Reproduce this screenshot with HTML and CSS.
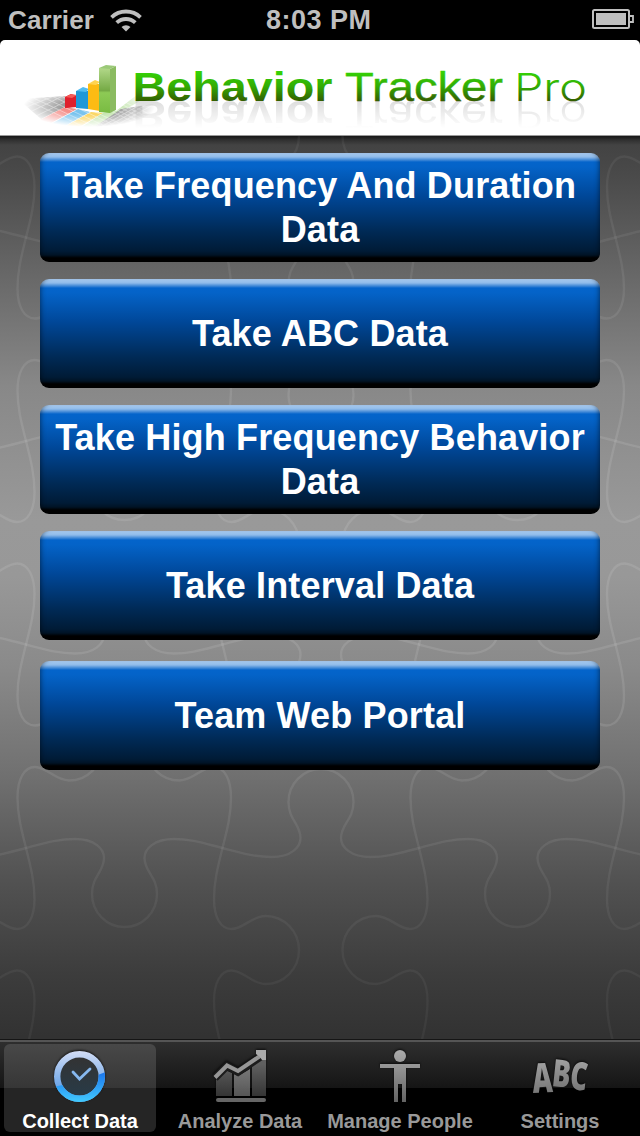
FILE: index.html
```
<!DOCTYPE html>
<html lang="en">
<head>
<meta charset="UTF-8" />
<meta name="viewport" content="width=device-width, initial-scale=1" />
<title>Behavior Tracker Pro</title>
<link rel="stylesheet" href="styles.css">
</head>
<body>

<div class="statusBar">
  <div class="carrier">
    <span class="carrierName">Carrier</span>
    <svg class="wifi" width="32" height="24" viewBox="0 0 32 24" fill="none" stroke="#bfbfbf" stroke-width="3.800">
      <path d="M1.500 9.300a21 21 0 0 1 29 0" />
      <path d="M6.700 14.700a13.500 13.500 0 0 1 18.600 0" />
      <path d="M16 23.500l-4.500-4.500a6.400 6.400 0 0 1 9 0z" fill="#bfbfbf" stroke="none" />
    </svg>
  </div>
  <span class="clock">8:03 PM</span>
  <svg class="battery" width="42" height="20" viewBox="0 0 42 20">
    <rect x="1" y="1" width="36" height="18" rx="1.500" fill="none" stroke="#bfbfbf" stroke-width="2" />
    <rect x="4" y="4" width="30" height="12" fill="#bfbfbf" />
    <path d="M38 7h3v6h-3" fill="none" stroke="#bfbfbf" stroke-width="1.800" />
  </svg>
</div>

<header class="header">
  <svg class="logo" width="640" height="95" viewBox="0 40 640 95">
    <defs>
      <linearGradient id="green" gradientUnits="userSpaceOnUse" x1="0" y1="71" x2="0" y2="101">
        <stop offset="0" stop-color="#35d406" />
        <stop offset=".5" stop-color="#32ad04" />
        <stop offset="1" stop-color="#345d00" />
      </linearGradient>
      <linearGradient id="fade" gradientUnits="userSpaceOnUse" x1="0" y1="100" x2="0" y2="128">
        <stop offset="0" stop-color="#fff" stop-opacity=".14" />
        <stop offset="1" stop-color="#fff" stop-opacity="0" />
      </linearGradient>
      <mask id="fadeMask" maskUnits="userSpaceOnUse" x="0" y="100" width="640" height="35">
        <rect x="0" y="100" width="640" height="35" fill="url(#fade)" />
      </mask>
      <radialGradient id="floorFade">
        <stop offset=".4" stop-color="#fff" />
        <stop offset="1" stop-color="#fff" stop-opacity="0" />
      </radialGradient>
      <mask id="floorMask" maskUnits="userSpaceOnUse" x="15" y="86" width="145" height="46">
        <ellipse cx="89" cy="107" rx="66" ry="20" fill="url(#floorFade)" />
      </mask>
      <linearGradient id="bar" x1="0" y1="0" x2="0" y2="1">
        <stop offset="0" stop-color="#b2d889" />
        <stop offset=".5" stop-color="#75aa45" />
        <stop offset=".55" stop-color="#8dca55" />
        <stop offset="1" stop-color="#79bb42" />
      </linearGradient>
      <g id="wordmark" class="wordmark">
        <text class="wordBold" x="132.500" y="101" textLength="200" lengthAdjust="spacingAndGlyphs">Behavior</text>
        <text class="wordRegular" x="345" y="101" textLength="158" lengthAdjust="spacingAndGlyphs">Tracker</text>
        <text class="wordLight" x="514" y="101" textLength="73" lengthAdjust="spacingAndGlyphs">Pro</text>
      </g>
    </defs>

    <!-- floor under the chart -->
    <g mask="url(#floorMask)">
      <path d="M18 99l47-3v11l-24 12z" fill="#9a9a9a" />
      <path d="M40 120l25-13 12 2-26 14z" fill="#f58f8a" />
      <path d="M51 124l27-15 12 3-27 15z" fill="#79c3ee" />
      <path d="M64 127l27-15 12 1-27 16z" fill="#fad768" />
      <path d="M77 130l26-17 13-2 22-17 8 3-54 34z" fill="#c5e5b0" />
      <path d="M90 130l31-21 38-6-8 18-50 12z" fill="#8f8f8f" />
      <g stroke="#fff" stroke-width=".9" opacity=".45">
        <path d="M20 97l75 35M27 95l75 35M34 93l75 35M41 91l75 35M48 90l75 35M85 98l60 30M93 98l60 30M101 98l50 25M109 98l40 20M117 98l36 18" />
        <path d="M24 108l45-18M28 113l45-22M34 117l45-22M92 132l60-34M98 132l60-34M104 132l58-32M86 132l60-34" />
      </g>
    </g>

    <path d="M65 97l7-3v13l-7 1z" fill="#e42932" />
    <path d="M65 97l6-3 6 2v11l-12 1z" fill="#df1f2c" />
    <path d="M65 97l6-3 6 1-5 3z" fill="#f45b58" />
    <path d="M76 91h12v18l-12-1z" fill="#1f98d8" />
    <path d="M76 91l7-4 6 2-3 3z" fill="#51bcf0" />
    <path d="M88 84h12v27l-12-2z" fill="#fdbb13" />
    <path d="M88 84l7-4 5 2-4 3z" fill="#ffd450" />
    <path d="M99 68h11v45l-11-1z" fill="url(#bar)" />
    <path d="M110 69l6-3v44l-6 3z" fill="#8bbb61" />
    <path d="M99 68l7-3 10 1-6 3z" fill="#9bc978" />

    <use href="#wordmark" fill="url(#green)" stroke="url(#green)" />
    <!-- reflection -->
    <g mask="url(#fadeMask)">
      <use href="#wordmark" fill="#000" transform="matrix(1 0 0 -1 0 202)" />
    </g>
  </svg>
</header>

<main class="content">
  <svg class="puzzle" width="640" height="903" viewBox="0 136 640 903" fill="none">
    <defs>
      <path id="h" d="M0 0C19-5 32-9 49-9C69-9 78 1 78 10C78 24 66 28 66 46A32.500 33 0 0 0 131 46C131 28 118.500 24 118.500 10C118.500 1 128-9 148-9C165-9 177-5 196.500 0" />
      <path id="v" d="M0 0C5 20 8.500 34 8.500 51C8.500 69 2 81-9 81C-21 81-29 68-43 68A33.500 34 0 0 0-43 136C-29 136-21 122.500-9 122.500C2 122.500 8.500 135 8.500 153C8.500 170 5 184 0 203.500" />
      <g id="tile">
        <use href="#h" />
        <use href="#h" transform="translate(196.500 0) scale(1 -1)" />
        <use href="#h" transform="translate(0 203.500) scale(1 -1)" />
        <use href="#h" transform="translate(196.500 203.500)" />
        <use href="#v" />
        <use href="#v" transform="translate(0 203.500) scale(-1 1)" />
        <use href="#v" transform="translate(196.500 0) scale(-1 1)" />
        <use href="#v" transform="translate(196.500 203.500)" />
      </g>
      <g id="lastRow">
        <use href="#h" />
        <use href="#h" transform="translate(196.500 0) scale(1 -1)" />
        <use href="#v" />
        <use href="#v" transform="translate(196.500 0) scale(-1 1)" />
      </g>
    </defs>
    <g stroke="#fff" stroke-opacity=".1" stroke-width="2.400">
      <use href="#tile" x="-367" y="34" />
      <use href="#tile" x="26" y="34" />
      <use href="#tile" x="419" y="34" />
      <use href="#tile" x="-367" y="441" />
      <use href="#tile" x="26" y="441" />
      <use href="#tile" x="419" y="441" />
      <use href="#lastRow" x="-367" y="848" />
      <use href="#lastRow" x="26" y="848" />
      <use href="#lastRow" x="419" y="848" />
    </g>
  </svg>

  <nav class="menu">
    <button class="menuButton">Take Frequency And Duration Data</button>
    <button class="menuButton">Take ABC Data</button>
    <button class="menuButton">Take High Frequency Behavior Data</button>
    <button class="menuButton">Take Interval Data</button>
    <button class="menuButton portal">Team Web Portal</button>
  </nav>
</main>

<footer class="tabBar">
  <div class="tab active">
    <svg class="tabIcon" width="56" height="56" viewBox="0 0 56 56">
      <defs>
        <linearGradient id="ringTop" gradientUnits="userSpaceOnUse" x1="0" y1="2" x2="0" y2="38">
          <stop offset="0" stop-color="#d3ddf5" />
          <stop offset="1" stop-color="#6ba5e8" />
        </linearGradient>
        <linearGradient id="ringBottom" gradientUnits="userSpaceOnUse" x1="0" y1="24" x2="0" y2="54">
          <stop offset="0" stop-color="#1c78ee" />
          <stop offset="1" stop-color="#43cdff" />
        </linearGradient>
        <linearGradient id="face" x1="0" y1="0" x2="0" y2="1">
          <stop offset="0" stop-color="#333" />
          <stop offset="1" stop-color="#283b48" />
        </linearGradient>
        <clipPath id="lower"><path d="M0 38Q28 34 56 22v34H0z" /></clipPath>
      </defs>
      <circle cx="27.500" cy="27.500" r="20" fill="url(#face)" />
      <circle cx="27.500" cy="27.500" r="22.300" fill="none" stroke="url(#ringTop)" stroke-width="6.400" />
      <circle cx="27.500" cy="27.500" r="22.300" fill="none" stroke="url(#ringBottom)" stroke-width="6.400" clip-path="url(#lower)" />
      <path d="M21 23l6.500 7L38 20" fill="none" stroke="#86b8ef" stroke-width="2.800" stroke-linecap="round" />
    </svg>
    <span class="tabLabel">Collect Data</span>
  </div>
  <div class="tab">
    <svg class="tabIcon" width="56" height="56" viewBox="0 0 56 56">
      <defs>
        <linearGradient id="grey" gradientUnits="userSpaceOnUse" x1="0" y1="2" x2="0" y2="54">
          <stop offset="0" stop-color="#aaa" />
          <stop offset="1" stop-color="#626262" />
        </linearGradient>
        <linearGradient id="greyText" x1="0" y1="0" x2="0" y2="1">
          <stop offset=".1" stop-color="#aaa" />
          <stop offset=".9" stop-color="#707070" />
        </linearGradient>
        <linearGradient id="column" gradientUnits="userSpaceOnUse" x1="0" y1="15" x2="0" y2="48">
          <stop offset="0" stop-color="#606060" />
          <stop offset="1" stop-color="#333" />
        </linearGradient>
      </defs>
      <path fill="url(#column)" d="M4 29l9-8 7 3v23H4zM40 17l10-7h4v37H40z" />
      <path fill="url(#grey)" d="M22 25l4 2 12-7v27H22z" opacity=".8" />
      <path fill="none" stroke="#1c1c1c" stroke-width="7.500" d="M3 29L15 17l11 6 24-16" />
      <path fill="none" stroke="#969696" stroke-width="4" d="M3 28.500L15 16.500l11 5.500L51 5" />
      <path fill="#aaa" d="M44 1h10v10h-4l-2-3-4-3z" />
      <rect x="4" y="49" width="50" height="4" rx="2" fill="#666" />
    </svg>
    <span class="tabLabel">Analyze Data</span>
  </div>
  <div class="tab">
    <svg class="tabIcon" width="56" height="56" viewBox="0 0 56 56" fill="url(#grey)">
      <circle cx="28" cy="7" r="6" />
      <path d="M8 15h40v4H34v34h-4V35h-4v18h-4V19H8z" />
    </svg>
    <span class="tabLabel">Manage People</span>
  </div>
  <div class="tab">
    <svg class="tabIcon abc" width="56" height="56" viewBox="0 0 56 56">
      <text transform="translate(1 44) rotate(-3) scale(.68 1)" font-size="41">A</text>
      <text transform="translate(19 37) rotate(6) scale(.72 1)" font-size="38">B</text>
      <text transform="translate(37 40) rotate(6) scale(.68 1)" font-size="39">C</text>
    </svg>
    <span class="tabLabel">Settings</span>
  </div>
</footer>

</body>
</html>
```
FILE: styles.css
```
* { box-sizing: border-box; }

body {
  margin: 0;
  width: 640px;
  height: 1136px;
  display: flex;
  flex-direction: column;
  overflow: hidden;
  background: #000;
  font-family: "Liberation Sans", Arial, sans-serif;
  font-weight: bold;
}

.statusBar {
  height: 40px;
  padding: 0 6px 0 8px;
  display: grid;
  grid-template-columns: 258px 1fr auto;
  align-items: center;
  color: #bfbfbf;
}
.carrier {
  display: flex;
  align-items: center;
}
.carrierName {
  width: 102px;
  font-size: 26px;
  letter-spacing: 0.1px;
}
.clock {
  font-size: 27px;
  letter-spacing: 0.5px;
}
.wifi { margin-bottom: 1px; }
.battery { margin-top: -2px; }

.header {
  height: 96px;
  background: #fff;
  border-radius: 5px 5px 0 0;
  border-bottom: 1px solid #999;
}
.logo { display: block; }
.wordmark { font-size: 40px; }
.wordBold {
  font-weight: 700;
  stroke-width: 0;
}
.wordRegular {
  font-weight: 400;
  stroke-width: 0.4px;
}
.wordLight {
  font-family: Inter, sans-serif;
  font-size: 38.500px;
  font-weight: 300;
  stroke-width: 0;
}

.content {
  position: relative;
  height: 903px;
  background: linear-gradient(#161616 0, #303030 4px, #434343 9px, #4a4a4a 40px, #626262 120px, #888 250px, #999 385px, #989898 440px, #8a8a8a 530px, #707070 640px, #535353 740px, #3c3c3c 840px, #323232 900px);
}
.puzzle {
  position: absolute;
  top: 0;
  left: 0;
  -webkit-mask-image: linear-gradient(rgba(0,0,0,0.5), #000 35%, #000 65%, rgba(0,0,0,0.45) 90%);
  mask-image: linear-gradient(rgba(0,0,0,0.5), #000 35%, #000 65%, rgba(0,0,0,0.45) 90%);
}

.menu {
  position: relative;
  padding: 17px 40px 0;
  display: flex;
  flex-direction: column;
  gap: 17px;
}
.menuButton {
  height: 109px;
  padding: 0 8px;
  border: none;
  border-radius: 9px;
  background: linear-gradient(#a9cbef 0, #8fbbea 4px, #3f87d6 7px, #0464cb 9px, #0463c8 14px, #00489a 42px, #002a56 78px, #001b36 98px, #001325 102px, #000 105px);
  box-shadow: inset 5px 0 5px -4px rgba(0,0,0,0.45), inset -5px 0 5px -4px rgba(0,0,0,0.45);
  color: #fff;
  font: bold 36px/44px "Liberation Sans", Arial, sans-serif;
  letter-spacing: 0.15px;
  cursor: pointer;
}
.portal { margin-top: 4px; }

.tabBar {
  height: 97px;
  padding: 4px 4px 4px;
  display: grid;
  grid-template-columns: repeat(4, 152px);
  column-gap: 8px;
  border-top: 1px solid #151515;
  background: linear-gradient(#555 0, #555 2px, #2e2e2e 2px, #151515 48px, #000 48px);
}
.tab {
  height: 88px;
  padding-top: 5px;
  display: flex;
  flex-direction: column;
  align-items: center;
}
.tab.active {
  border-radius: 6px;
  background: linear-gradient(#484848 0, #363636 44px, #252525 44px);
}
.tabIcon {
  overflow: visible;
  filter: drop-shadow(0 -1px 1px rgba(0,0,0,0.7));
}
.tabLabel {
  margin-top: 4px;
  color: #999;
  font-size: 20px;
  line-height: 24px;
  white-space: nowrap;
}
.active .tabLabel { color: #fff; }
.abc {
  font-family: "Open Sans", sans-serif;
  font-weight: 800;
}
.abc text {
  fill: url(#greyText);
}
```
